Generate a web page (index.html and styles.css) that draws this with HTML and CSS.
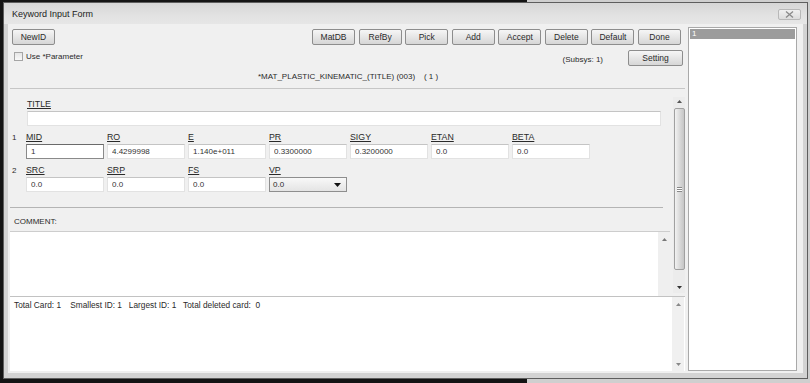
FILE: index.html
```html
<!DOCTYPE html>
<html lang="en">
<head>
    <meta charset="UTF-8">
    <meta name="viewport" content="width=device-width, initial-scale=1.0">
    <title>Keyword Input Form</title>
    <link rel="stylesheet" href="styles.css">
</head>
<body>
    <div class="window">
        <div class="titlebar">
            <span class="title">Keyword Input Form</span>
            <span class="close-btn">
                <svg width="9" height="7" viewBox="0 0 9 7"><path d="M1 0.5 L8 6.5 M8 0.5 L1 6.5" stroke="#8a8a8a" stroke-width="1.3" fill="none"/></svg>
            </span>
        </div>
        <div class="client">
            <div class="main">
                <div class="toolbar">
                    <button class="btn">NewID</button>
                    <div class="toolbar-right">
                        <button class="btn">MatDB</button>
                        <button class="btn">RefBy</button>
                        <button class="btn">Pick</button>
                        <button class="btn">Add</button>
                        <button class="btn">Accept</button>
                        <button class="btn">Delete</button>
                        <button class="btn">Default</button>
                        <button class="btn">Done</button>
                    </div>
                </div>
                <div class="options">
                    <label class="check"><span class="checkbox"></span>Use *Parameter</label>
                    <div class="options-right">
                        <span class="subsys">(Subsys: 1)</span>
                        <button class="btn btn-setting">Setting</button>
                    </div>
                </div>
                <div class="kw-title">*MAT_PLASTIC_KINEMATIC_(TITLE) (003)&nbsp;&nbsp;&nbsp;&nbsp;( 1 )</div>

                <div class="form-scroll">
                    <div class="form-content">
                        <div class="cards">
                            <div class="title-row">
                                <span class="field-label">TITLE</span>
                                <input class="field title-input" value="">
                            </div>
                            <div class="card-row">
                                <span class="card-num">1</span>
                                <div class="field-grid">
                                    <div class="field-cell"><span class="field-label">MID</span><input class="field focused" value="1"></div>
                                    <div class="field-cell"><span class="field-label">RO</span><input class="field" value="4.4299998"></div>
                                    <div class="field-cell"><span class="field-label">E</span><input class="field" value="1.140e+011"></div>
                                    <div class="field-cell"><span class="field-label">PR</span><input class="field" value="0.3300000"></div>
                                    <div class="field-cell"><span class="field-label">SIGY</span><input class="field" value="0.3200000"></div>
                                    <div class="field-cell"><span class="field-label">ETAN</span><input class="field" value="0.0"></div>
                                    <div class="field-cell"><span class="field-label">BETA</span><input class="field" value="0.0"></div>
                                </div>
                            </div>
                            <div class="card-row">
                                <span class="card-num">2</span>
                                <div class="field-grid">
                                    <div class="field-cell"><span class="field-label">SRC</span><input class="field" value="0.0"></div>
                                    <div class="field-cell"><span class="field-label">SRP</span><input class="field" value="0.0"></div>
                                    <div class="field-cell"><span class="field-label">FS</span><input class="field" value="0.0"></div>
                                    <div class="field-cell">
                                        <span class="field-label">VP</span>
                                        <div class="select">
                                            <span>0.0</span>
                                            <svg width="7" height="4" viewBox="0 0 7 4"><path d="M0 0 L7 0 L3.5 4 Z" fill="#111"/></svg>
                                        </div>
                                    </div>
                                </div>
                            </div>
                        </div>
                        <div class="divider"></div>
                        <div class="comment-label">COMMENT:</div>
                        <div class="comment-box">
                            <div class="comment-text"></div>
                            <div class="mini-scroll">
                                <svg width="5" height="3" viewBox="0 0 5 3"><path d="M0 3 L5 3 L2.5 0 Z" fill="#777"/></svg>
                            </div>
                        </div>
                    </div>
                    <div class="vscroll">
                        <svg class="arrow-up" width="5" height="3" viewBox="0 0 5 3"><path d="M0 3 L5 3 L2.5 0 Z" fill="#555"/></svg>
                        <div class="thumb"><span class="grip"></span></div>
                        <svg class="arrow-down" width="5" height="3" viewBox="0 0 5 3"><path d="M0 0 L5 0 L2.5 3 Z" fill="#333"/></svg>
                    </div>
                </div>

                <div class="status">
                    <div class="status-text">Total Card: 1    Smallest ID: 1   Largest ID: 1   Total deleted card:  0</div>
                    <div class="status-scroll">
                        <svg width="5" height="3" viewBox="0 0 5 3"><path d="M0 3 L5 3 L2.5 0 Z" fill="#888"/></svg>
                        <svg width="5" height="3" viewBox="0 0 5 3"><path d="M0 0 L5 0 L2.5 3 Z" fill="#888"/></svg>
                    </div>
                </div>
            </div>
            <div class="idlist">
                <div class="id-item selected">1</div>
            </div>
        </div>
    </div>
</body>
</html>
```

FILE: styles.css
```css
* {
    margin: 0;
    padding: 0;
    box-sizing: border-box;
}

body {
    font-family: 'Liberation Sans', Arial, sans-serif;
    font-size: 8px;
    color: #2a2a2a;
    height: 383px;
    overflow: hidden;
    background: linear-gradient(to right, #141414 527px, #cfcfcf 527px);
}

.window {
    width: 805px;
    height: 377px;
    margin: 2px 0 0 3px;
    border: 1px solid #5e5e5e;
    background-color: #d3d3d3;
    padding: 0 4px 5px 4px;
    display: flex;
    flex-direction: column;
}

/* title bar */
.titlebar {
    height: 21px;
    margin: 0 -4px;
    padding: 0 6px 0 8px;
    display: flex;
    align-items: center;
    justify-content: space-between;
    background: linear-gradient(#d6d6d6, #e2e2e2 60%, #e6e6e6);
}

.title {
    font-size: 9px;
    color: #222;
}

.close-btn {
    width: 23px;
    height: 11px;
    margin-top: 2px;
    border: 1px solid #b8b8b8;
    border-radius: 2px;
    background: linear-gradient(#f0f0f0, #dcdcdc);
    display: flex;
    align-items: center;
    justify-content: center;
}

.client {
    flex: 1;
    display: flex;
    gap: 3px;
    padding: 3px 6px 2px 2px;
    background-color: #f0f0f0;
}

.main {
    width: 675px;
    display: flex;
    flex-direction: column;
    padding-top: 2px;
}

/* buttons */
.btn {
    height: 16px;
    width: 43px;
    font-family: inherit;
    font-size: 8.5px;
    color: #2a2a2a;
    border: 1px solid #8d8d8d;
    border-radius: 2px;
    background: linear-gradient(#f6f6f6, #e6e6e6 50%, #d6d6d6);
}

.toolbar {
    display: flex;
    justify-content: space-between;
    padding: 0 4px 0 2px;
}

.toolbar-right {
    display: flex;
    gap: 3.57px;
}

.options {
    display: flex;
    justify-content: space-between;
    align-items: center;
    margin-top: 5px;
    height: 16px;
    padding: 0 2px 0 4px;
}

.check {
    display: flex;
    align-items: center;
    gap: 3px;
    margin-top: -3px;
}

.checkbox {
    width: 9px;
    height: 9px;
    border: 1px solid #a5a5a5;
    background: linear-gradient(#e6e6e6, #f8f8f8);
}

.options-right {
    display: flex;
    align-items: center;
    gap: 25px;
}

.subsys {
    margin-top: 2px;
}

.btn-setting {
    width: 55px;
}

.kw-title {
    height: 22px;
    line-height: 12px;
    padding: 5px 0 5px 248px;
    white-space: pre;
}

/* keyword card area */
.form-scroll {
    height: 208px;
    display: flex;
    border-top: 1px solid #c6c6c6;
}

.form-content {
    width: 663px;
    display: flex;
    flex-direction: column;
}

.cards {
    padding-top: 10px;
}

.title-row {
    display: flex;
    flex-direction: column;
    padding-left: 17px;
}

.field-label {
    display: block;
    height: 11px;
    line-height: 11px;
    margin-bottom: 1px;
    font-size: 8.8px;
    text-decoration: underline;
    color: #2a2a2a;
}

.field {
    height: 15px;
    width: 78px;
    padding: 0 4px;
    font-family: inherit;
    font-size: 8px;
    color: #333;
    background-color: #fff;
    border: 1px solid #e2e2e2;
    border-top-color: #c4c4c4;
    outline: none;
}

.field.focused {
    border-color: #8a8a8a;
    border-top-color: #6a6a6a;
}

.title-input {
    width: 634px;
}

.card-row {
    display: flex;
    margin-top: 6px;
}

.card-num {
    width: 16px;
    padding-left: 2px;
    line-height: 11px;
}

.field-grid {
    display: grid;
    grid-template-columns: repeat(7, 78px);
    column-gap: 3px;
}

.select {
    height: 15px;
    width: 78px;
    padding: 0 5px 0 3px;
    display: flex;
    align-items: center;
    justify-content: space-between;
    border: 1px solid #8e8e8e;
    background: linear-gradient(#f8f8f8, #e4e4e4);
}

.divider {
    width: 653px;
    height: 1px;
    margin-top: 15px;
    background-color: #b4b4b4;
}

.comment-label {
    margin-top: 8px;
    padding-left: 4px;
    height: 11px;
    line-height: 11px;
    margin-bottom: 4px;
}

.comment-box {
    width: 660px;
    height: 65px;
    display: flex;
    border-top: 1px solid #cdcdcd;
    background-color: #fff;
}

.comment-text {
    flex: 1;
}

.mini-scroll {
    width: 12px;
    background-color: #efefef;
    display: flex;
    justify-content: center;
    padding-top: 6px;
}

/* scrollbars */
.vscroll {
    width: 12px;
    margin: 8px 0 3px 0;
    display: flex;
    flex-direction: column;
    align-items: center;
    background-color: #ececec;
}

.arrow-up {
    margin-top: 3px;
}

.thumb {
    width: 11px;
    height: 162px;
    margin-top: 5px;
    border: 1px solid #a0a0a0;
    border-radius: 2px;
    background: linear-gradient(to right, #f2f2f2, #d6d6d6 60%, #c6c6c6);
    display: flex;
    align-items: center;
    justify-content: center;
}

.grip {
    width: 5px;
    height: 5px;
    border-top: 1px solid #888;
    border-bottom: 1px solid #888;
    background: linear-gradient(#fff 0 1px, #888 1px 2px, #fff 2px);
}

.arrow-down {
    margin-top: auto;
    margin-bottom: 4px;
}

/* status area */
.status {
    flex: 1;
    display: flex;
    border-top: 1px solid #c2c2c2;
    background-color: #fff;
}

.status-text {
    flex: 1;
    padding: 3px 4px;
    font-size: 8.3px;
    white-space: pre;
    color: #2a2a2a;
}

.status-scroll {
    width: 12px;
    margin-right: 1px;
    background-color: #f0f0f0;
    display: flex;
    flex-direction: column;
    align-items: center;
    justify-content: space-between;
    padding: 6px 0 5px;
}

/* id list */
.idlist {
    width: 109px;
    border: 1px solid #a9a9a9;
    box-shadow: inset 0 0 0 1px #fff;
    background-color: #fff;
    padding: 1px;
}

.id-item {
    height: 10px;
    line-height: 10px;
    padding-left: 2px;
    color: #fff;
}

.id-item.selected {
    background-color: #9c9c9c;
}
```
